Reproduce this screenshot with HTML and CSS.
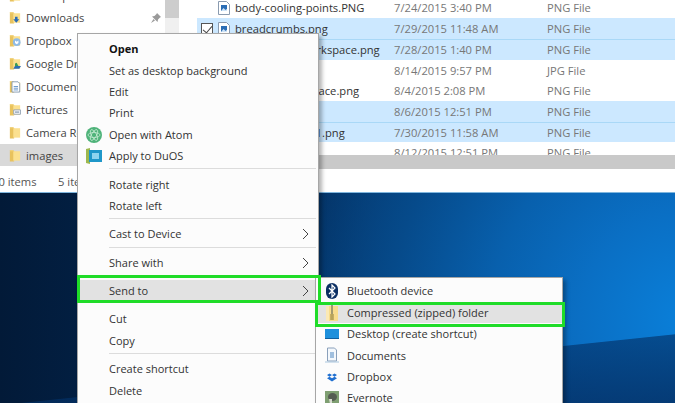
FILE: index.html
```html
<!doctype html>
<html lang="en">
  <head>
    <meta charset="UTF-8" />
    <meta name="viewport" content="width=device-width, initial-scale=1.0" />
    <title>Send to compressed folder</title>
    <link rel="stylesheet" href="styles.css">
  </head>
  <body>
    <svg class="defs" width="0" height="0">
      <symbol id="folder" viewBox="0 0 14 16">
        <path d="M1 2h4l1 1v12H1z" fill="#e8c25e" />
        <path d="M5 3h8v11H5z" fill="#fbe08f" />
        <path d="M1 2h4v1H1z" fill="#f3d57e" />
      </symbol>
      <symbol id="png" viewBox="0 0 12 14">
        <path d="M.5.5h8l3 3v10H.5z" fill="#fff" stroke="#8a9bb0" />
        <path d="M3 4h6v6H3z" fill="#2a6db5" />
        <path d="M3 10l2.500-3 2 2 1-1 .5.500V10z" fill="#cfe4f7" />
      </symbol>
    </svg>

    <div class="desktop">
      <div class="explorer">
        <div class="panes">
          <div class="nav">
            <div class="nav-item"><svg class="nav-icon"><use href="#folder" /></svg>Desktop</div>
            <div class="nav-item">
              <svg class="nav-icon" viewBox="0 0 14 16">
                <use href="#folder" width="14" height="16" />
                <path d="M7 7h3v3h2l-3.500 4L5 10h2z" fill="#2d6cb5" />
              </svg>
              Downloads
              <svg class="pin" viewBox="0 0 12 12">
                <path d="M7 1l4 4-1 .5-2 2L7.500 10 2 4.500 4.500 4l2-2zM3.500 7L1 11l4-2.500z" fill="#9a9a9a" />
              </svg>
            </div>
            <div class="nav-item">
              <svg class="nav-icon" viewBox="0 0 14 16">
                <use href="#folder" width="14" height="16" />
                <circle cx="9" cy="10" r="4.500" fill="#8fbbe6" />
                <path d="M7 8l2 1.500L11 8v3l-2 1.500L7 11z" fill="#fff" />
              </svg>
              Dropbox
            </div>
            <div class="nav-item">
              <svg class="nav-icon" viewBox="0 0 14 16">
                <use href="#folder" width="14" height="16" />
                <path d="M7 8l2-1 2 4H7z" fill="#3c9b55" />
                <path d="M5 14l2-3h7l-2 3z" fill="#2d6cb5" />
              </svg>
              Google Drive
            </div>
            <div class="nav-item">
              <svg class="nav-icon" viewBox="0 0 14 16">
                <use href="#folder" width="14" height="16" />
                <path d="M3.500 2.500h7l2 2v10h-9z" fill="#fff" stroke="#7d93ad" />
                <path d="M5.500 8h5M5.500 10h5M5.500 12h5" stroke="#5a8cc4" />
              </svg>
              Documents
            </div>
            <div class="nav-item">
              <svg class="nav-icon" viewBox="0 0 14 16">
                <use href="#folder" width="14" height="16" />
                <path d="M5.500 8.500h8v5h-8z" fill="#fff" stroke="#8a9bb0" />
                <path d="M7 11h5" stroke="#48678a" />
              </svg>
              Pictures
            </div>
            <div class="nav-item"><svg class="nav-icon"><use href="#folder" /></svg>Camera Roll</div>
            <div class="nav-item nav-current"><svg class="nav-icon"><use href="#folder" /></svg>images</div>
          </div>
          <div class="nav-scroll"><div class="nav-thumb"></div></div>
          <div class="files">
            <div class="list">
              <div class="file">
                <span class="check"></span><svg class="file-icon"><use href="#png" /></svg>
                <span class="name">body-cooling-points.PNG</span><span class="date">7/24/2015 3:40 PM</span><span class="type">PNG File</span>
              </div>
              <div class="file selected">
                <span class="check checked"></span><svg class="file-icon"><use href="#png" /></svg>
                <span class="name">breadcrumbs.png</span><span class="date">7/29/2015 11:48 AM</span><span class="type">PNG File</span>
              </div>
              <div class="file selected">
                <span class="check"></span><svg class="file-icon"><use href="#png" /></svg>
                <span class="name">chrome-dev-workspace.png</span><span class="date">7/28/2015 1:40 PM</span><span class="type">PNG File</span>
              </div>
              <div class="file">
                <span class="check"></span><svg class="file-icon"><use href="#png" /></svg>
                <span class="name">desk.jpg</span><span class="date">8/14/2015 9:57 PM</span><span class="type">JPG File</span>
              </div>
              <div class="file">
                <span class="check"></span><svg class="file-icon"><use href="#png" /></svg>
                <span class="name">desktop-workspace.png</span><span class="date">8/4/2015 2:08 PM</span><span class="type">PNG File</span>
              </div>
              <div class="file selected">
                <span class="check"></span><svg class="file-icon"><use href="#png" /></svg>
                <span class="name">dock.png</span><span class="date">8/6/2015 12:51 PM</span><span class="type">PNG File</span>
              </div>
              <div class="file selected">
                <span class="check"></span><svg class="file-icon"><use href="#png" /></svg>
                <span class="name">extension-tabs-1.png</span><span class="date">7/30/2015 11:58 AM</span><span class="type">PNG File</span>
              </div>
              <div class="file">
                <span class="check"></span><svg class="file-icon"><use href="#png" /></svg>
                <span class="name">file-history.png</span><span class="date">8/12/2015 12:51 PM</span><span class="type">PNG File</span>
              </div>
            </div>
            <div class="hscroll"></div>
          </div>
        </div>
        <div class="status"><span class="status-count">90 items</span><span>5 items selected</span></div>
      </div>

      <!-- context menu -->
      <div class="menu">
        <div class="item bold">Open</div>
        <div class="item">Set as desktop background</div>
        <div class="item">Edit</div>
        <div class="item">Print</div>
        <div class="item">
          <svg class="item-icon" viewBox="0 0 16 16">
            <circle cx="8" cy="8" r="8" fill="#4fb37a" />
            <g fill="none" stroke="#c4e8d2" stroke-width=".8">
              <ellipse cx="8" cy="8" rx="6" ry="2.500" />
              <ellipse cx="8" cy="8" rx="6" ry="2.500" transform="rotate(60 8 8)" />
              <ellipse cx="8" cy="8" rx="6" ry="2.500" transform="rotate(120 8 8)" />
            </g>
          </svg>
          Open with Atom
        </div>
        <div class="item">
          <svg class="item-icon" viewBox="0 0 16 16">
            <path d="M0 1l4-1v16l-4-1z" fill="#9db84f" />
            <path d="M3 2h13v12H3z" fill="#1f97c9" />
            <path d="M6 5h7v6H6z" fill="#8ed4ef" />
          </svg>
          Apply to DuOS
        </div>
        <div class="sep"></div>
        <div class="item">Rotate right</div>
        <div class="item">Rotate left</div>
        <div class="sep"></div>
        <div class="item has-sub">Cast to Device<svg class="chev" viewBox="0 0 7 12"><path d="M1 1l5 5-5 5" /></svg></div>
        <div class="sep"></div>
        <div class="item has-sub">Share with<svg class="chev" viewBox="0 0 7 12"><path d="M1 1l5 5-5 5" /></svg></div>
        <div class="sep"></div>
        <div class="item has-sub active">Send to<svg class="chev" viewBox="0 0 7 12"><path d="M1 1l5 5-5 5" /></svg></div>
        <div class="sep blank"></div>
        <div class="item">Cut</div>
        <div class="item">Copy</div>
        <div class="sep"></div>
        <div class="item">Create shortcut</div>
        <div class="item">Delete</div>
      </div>

      <!-- send to submenu -->
      <div class="submenu">
        <div class="item">
          <svg class="item-icon" viewBox="0 0 14 16">
            <rect x="1" width="12" height="16" rx="6" fill="#0c2f63" />
            <path d="M4 5l6 6-3 3V2l3 3-6 6" fill="none" stroke="#fff" stroke-width="1.200" />
          </svg>
          Bluetooth device
        </div>
        <div class="item active">
          <svg class="item-icon" viewBox="0 0 14 16">
            <path d="M1 1h12v15H1z" fill="#f8dc8c" />
            <path d="M1 1h3v15H1z" fill="#fbe9b4" />
            <path d="M6.200 0h1.600v10H6.200z" fill="#8d8a6a" />
            <path d="M5.200 9h3.600v6H5.200z" fill="#b8a35a" />
          </svg>
          Compressed (zipped) folder
        </div>
        <div class="item">
          <svg class="item-icon" viewBox="0 0 14 16">
            <path d="M0 3h14v10H0z" fill="#1e90dc" />
            <path d="M0 12h14v1H0z" fill="#0f5f9e" />
          </svg>
          Desktop (create shortcut)
        </div>
        <div class="item">
          <svg class="item-icon" viewBox="0 0 14 16">
            <path d="M2.500 1h7l2 2v11h-9z" fill="#f4f8fc" stroke="#8aa0bb" />
            <path d="M5 6h4M5 8h4M5 10h4" stroke="#4d86c0" />
            <path d="M0 15h14" stroke="#a9c6de" />
          </svg>
          Documents
        </div>
        <div class="item">
          <svg class="item-icon" viewBox="0 0 14 16">
            <path d="M4.500 4.500l2.500 1.600-2.500 1.600L2 6.100zM9.500 4.500L12 6.100 9.500 7.700 7 6.100zM4.500 7.700L7 9.300l2.500-1.600L12 9.300 7 12.500 2 9.300z" fill="#1f6fd0" />
          </svg>
          Dropbox
        </div>
        <div class="item">
          <svg class="item-icon" viewBox="0 0 14 16">
            <rect y="1" width="14" height="14" fill="#7f9f72" />
            <ellipse cx="7.500" cy="7" rx="4.500" ry="4" fill="#555c52" />
            <path d="M4 9h3v5H5z" fill="#d8dcd0" />
          </svg>
          Evernote
        </div>
      </div>

      <div class="callout callout-send"></div>
      <div class="callout callout-zip"></div>
    </div>
  </body>
</html>
```

FILE: styles.css
```css
* {
  margin: 0;
  padding: 0;
  box-sizing: border-box;
}

body {
  font-family: "Open Sans", "Liberation Sans", sans-serif;
  font-size: 11px;
  color: #333;
  overflow: hidden;
}

.defs {
  position: absolute;
}

/* wallpaper: dark band across the bottom, glow on the right */
.desktop {
  position: relative;
  width: 675px;
  height: 403px;
  overflow: hidden;
  background:
    linear-gradient(174deg, transparent 85.4%, rgba(3, 50, 105, 0.65) 85.6%, rgba(3, 40, 90, 0.75) 100%),
    radial-gradient(circle at 690px 320px, #0a80da 0, #0a6fc4 110px, #0860ad 200px, #064a8a 300px, rgba(4, 56, 110, 0) 420px),
    linear-gradient(90deg, #021a38 0%, #032a58 40%, #04386f 70%, #04386f 100%);
}

.explorer {
  height: 193px;
  background: #fff;
  border-bottom: 1px solid #7fb6de;
}

.panes {
  display: flex;
  height: 170px;
}

.nav {
  width: 165px;
  flex-shrink: 0;
  height: 166px;
  overflow: hidden;
}

.nav-item {
  display: flex;
  align-items: center;
  gap: 5px;
  height: 22.9px;
  padding-left: 9px;
  font-size: 11.2px;
  color: #444;
  position: relative;
  top: -16.4px;
}

.nav-current {
  background: #d9d9d9;
}

.nav-icon {
  width: 12px;
  height: 15px;
  flex-shrink: 0;
}

.pin {
  position: absolute;
  left: 150px;
  top: 5px;
  width: 12px;
  height: 12px;
}

.nav-scroll {
  width: 14px;
  height: 170px;
  background: #f0f0f0;
}

.nav-thumb {
  height: 18px;
  background: #cdcdcd;
}

.files {
  flex: 1;
  display: flex;
  flex-direction: column;
  height: 169px;
  overflow: hidden;
}

.list {
  height: 155px;
  overflow: hidden;
  padding-left: 18px;
}

.file {
  display: flex;
  align-items: center;
  height: 20.7px;
  position: relative;
  top: -2.4px;
  padding-left: 4px;
  font-size: 11.2px;
}

.file.selected {
  background: #cce8ff;
}

.file.selected + .file.selected {
  border-top: 1px solid #a9d8f7;
}

.check {
  width: 12px;
  height: 12px;
  margin-right: 5px;
  flex-shrink: 0;
}

.check.checked {
  border: 1px solid #555;
  background: #fff;
  position: relative;
}

.check.checked::after {
  content: "";
  position: absolute;
  left: 3px;
  top: 0;
  width: 4px;
  height: 8px;
  border: solid #444;
  border-width: 0 1px 1px 0;
  transform: rotate(40deg);
}

.file-icon {
  width: 12px;
  height: 14px;
  margin-right: 5px;
  flex-shrink: 0;
}

.name {
  width: 159px;
  flex-shrink: 0;
  white-space: nowrap;
}

.date {
  width: 153px;
  flex-shrink: 0;
  color: #777;
}

.type {
  color: #777;
}

.hscroll {
  height: 14px;
  background: #c9c9c9;
}

.status {
  display: flex;
  align-items: center;
  height: 22px;
  padding-left: 58px;
  font-size: 11.2px;
  color: #555;
  position: relative;
}

.status-count {
  position: absolute;
  left: -8px;
}

.menu {
  position: absolute;
  left: 77px;
  top: 33px;
  width: 242px;
  height: 380px;
  padding-top: 4px;
  background: #fcfcfc;
  border: 1px solid #a6a6a6;
  box-shadow: 3px 3px 4px rgba(0, 0, 0, 0.3);
}

.submenu {
  position: absolute;
  left: 315px;
  top: 277px;
  width: 248px;
  height: 130px;
  padding-top: 2.3px;
  background: #fcfcfc;
  border: 1px solid #a6a6a6;
  box-shadow: 3px 3px 4px rgba(0, 0, 0, 0.3);
}

.item {
  display: flex;
  align-items: center;
  height: 21.4px;
  padding-left: 31px;
  position: relative;
  font-size: 11px;
  color: #333;
}

.menu .item-icon {
  position: absolute;
  left: 8px;
  top: 3px;
  width: 16px;
  height: 16px;
}

.submenu .item-icon {
  position: absolute;
  left: 9px;
  top: 3px;
  width: 14px;
  height: 16px;
}

.bold {
  font-weight: 700;
  color: #111;
}

.active {
  background: #e2e2e2;
}

.sep {
  height: 7px;
  margin: 0 0 0 31px;
  position: relative;
}

.sep::after {
  content: "";
  position: absolute;
  left: 0;
  right: 2px;
  top: 2px;
  height: 1px;
  background: #dcdcdc;
}

.sep.blank::after {
  display: none;
}

.chev {
  position: absolute;
  right: 9px;
  top: 5px;
  width: 7px;
  height: 12px;
  fill: none;
  stroke: #444;
}

.callout {
  position: absolute;
  border: 3px solid #1fdc28;
}

.callout-send {
  left: 77px;
  top: 275px;
  width: 244px;
  height: 28px;
}

.callout-zip {
  left: 315px;
  top: 302px;
  width: 250px;
  height: 25px;
}
```
